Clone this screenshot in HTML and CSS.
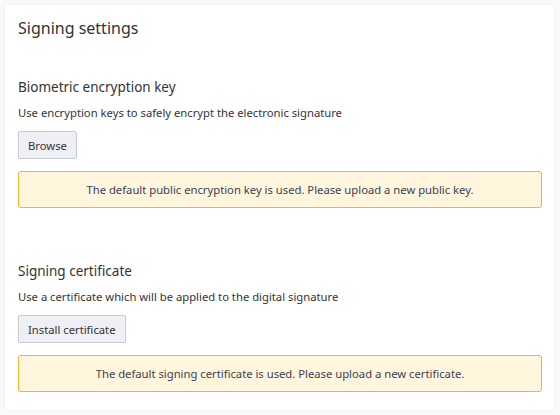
FILE: index.html
```html
<!DOCTYPE html>
<html>
<head>
<meta charset="utf-8">
<link rel="stylesheet" href="styles.css">
</head>
<body>
<div class="card">
  <h1 class="title">Signing settings</h1>
  <section class="section first">
    <h2 class="heading">Biometric encryption key</h2>
    <p class="desc">Use encryption keys to safely encrypt the electronic signature</p>
    <button class="btn">Browse</button>
    <div class="alert">The default public encryption key is used. Please upload a new public key.</div>
  </section>
  <section class="section second">
    <h2 class="heading">Signing certificate</h2>
    <p class="desc">Use a certificate which will be applied to the digital signature</p>
    <button class="btn">Install certificate</button>
    <div class="alert">The default signing certificate is used. Please upload a new certificate.</div>
  </section>
</div>
</body>
</html>
```
FILE: styles.css
```css
html, body {
  margin: 0;
  padding: 0;
  background: #f9f9f9;
  font-family: "Noto Sans", "Open Sans", sans-serif;
  color: #333;
}
.card {
  margin: 5px 6px 0 5px;
  height: 404px;
  box-sizing: border-box;
  background: #fff;
  box-shadow: 0 0 3px rgba(0,0,0,0.06);
  padding: 11px 12px 0 13px;
}
.title {
  margin: 0;
  font-size: 16px;
  line-height: 24px;
  font-weight: 400;
  color: #333;
}
.section {
  display: flex;
  flex-direction: column;
  align-items: flex-start;
}
.first { margin-top: 37px; }
.second { margin-top: 53px; }
.heading {
  margin: 0;
  font-size: 13.5px;
  line-height: 20px;
  font-weight: 400;
  color: #333;
}
.desc {
  margin: 7px 0 0 0;
  font-size: 11.25px;
  line-height: 18px;
  color: #333;
}
.btn {
  margin-top: 9px;
  height: 28px;
  padding: 0 9px;
  font-family: inherit;
  font-size: 11.25px;
  color: #333;
  background: #eef0f5;
  border: 1px solid #c9cbd0;
  border-radius: 2px;
}
.alert {
  margin-top: 12px;
  align-self: stretch;
  box-sizing: border-box;
  height: 37px;
  display: flex;
  align-items: center;
  justify-content: center;
  background: #fff6dd;
  border: 1px solid #f0b429;
  border-radius: 3px;
  font-size: 11.25px;
  color: #3d4152;
}
```
